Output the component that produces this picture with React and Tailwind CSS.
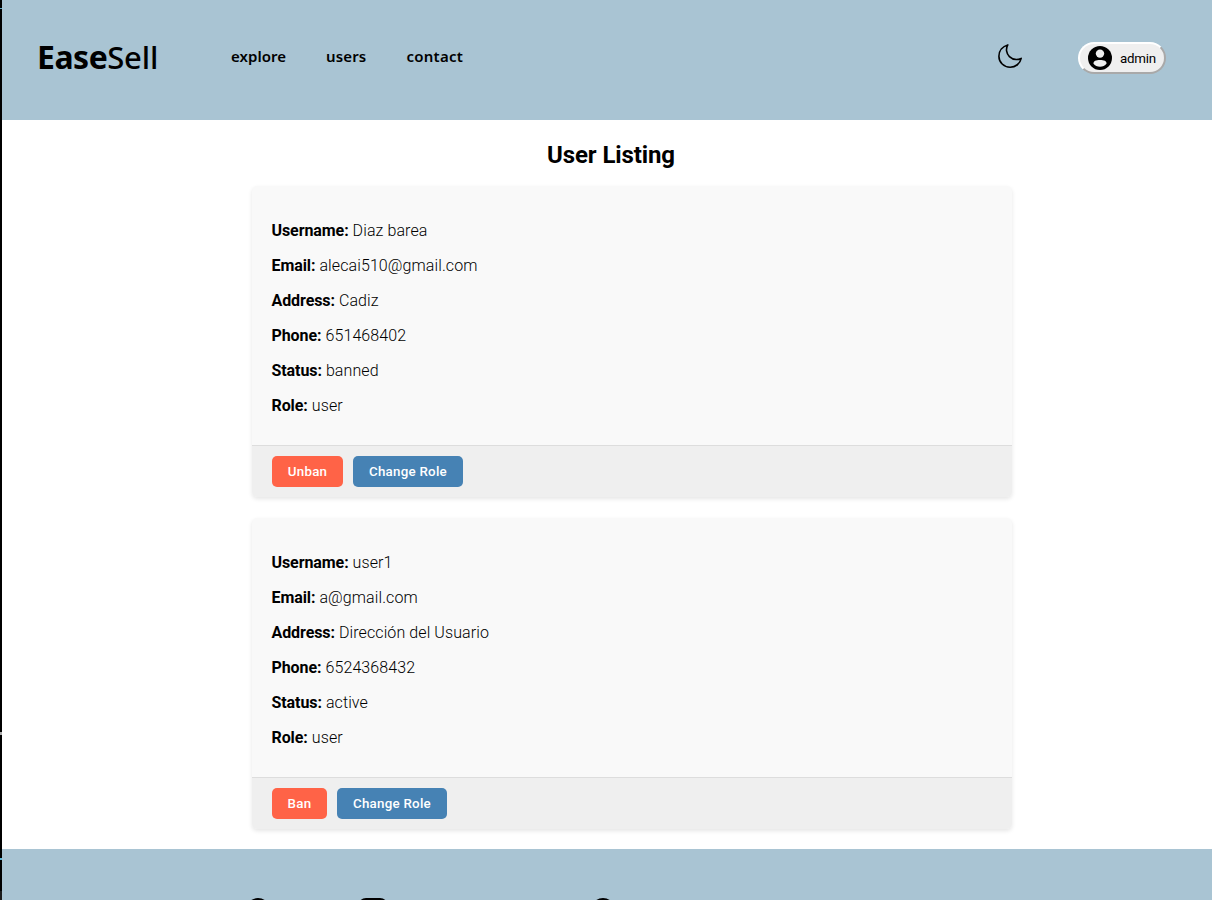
import React from "react";

const users = [
  {
    fields: [
      ["Username", "Diaz barea"],
      ["Email", "alecai510@gmail.com"],
      ["Address", "Cadiz"],
      ["Phone", "651468402"],
      ["Status", "banned"],
      ["Role", "user"],
    ],
    action: "Unban",
    actionWidth: "w-[71px]",
  },
  {
    fields: [
      ["Username", "user1"],
      ["Email", "a@gmail.com"],
      ["Address", "Dirección del Usuario"],
      ["Phone", "6524368432"],
      ["Status", "active"],
      ["Role", "user"],
    ],
    action: "Ban",
    actionWidth: "w-[55px]",
  },
];

function EdgeStrip() {
  return (
    <div className="flex h-full w-[2px] shrink-0 flex-col bg-black">
      <div className="mt-2 h-px bg-[#5fa8c4]" />
      <div className="mt-[723px] h-[3px] bg-[#aaaaaa]" />
      <div className="mt-[123px] h-[2px] bg-[#5fb8d8]" />
      <div className="mt-[31px] h-[9px] bg-[#1c1c1c]" />
    </div>
  );
}

function MoonIcon() {
  return (
    <svg viewBox="0 0 24 24" className="size-6" fill="none" stroke="black" strokeWidth="1.6" strokeLinejoin="round">
      <path d="M9.8 0.9 C4.6 2.4 0.9 6.8 0.9 12.2 C0.9 18.4 5.9 23.2 12.1 23.2 C17.6 23.2 22.1 19.6 23.2 14.4 C19.6 16 14.8 15.8 11.4 12.6 C8.2 9.5 7.6 4.6 9.8 0.9 Z" />
    </svg>
  );
}

function AccountIcon() {
  return (
    <svg viewBox="0 0 24 24" className="size-6 shrink-0">
      <circle cx="12" cy="12" r="12" fill="black" />
      <circle cx="12" cy="7.6" r="4.2" fill="#efefef" />
      <path d="M5.4 17.6 C5.4 14.9 8 14 12 14 C16 14 18.6 14.9 18.6 17.6 C17 19.9 14.7 20.8 12 20.8 C9.3 20.8 7 19.9 5.4 17.6 Z" fill="#efefef" />
    </svg>
  );
}

function Header() {
  return (
    <header className="flex h-[120px] items-start bg-[#a9c4d3] font-['Noto_Sans',sans-serif]">
      <div className="mt-[33px] ml-[35px] w-[194px] text-[32px] leading-[48px] whitespace-nowrap">
        <span className="font-bold tracking-[-0.5px]">Ease</span>
        <span className="text-[31px] font-medium tracking-[-0.2px]">Sell</span>
      </div>
      <nav className="mt-[44px] flex text-[15px] leading-6 font-semibold">
        <a className="w-[95px] tracking-[0.05px]">explore</a>
        <a className="w-[80.5px] tracking-[0.15px]">users</a>
        <a className="tracking-[0.25px]">contact</a>
      </nav>
      <div className="mt-[42px] mr-[46px] ml-auto flex items-start">
        <div className="mt-[2px] mr-[56px]">
          <MoonIcon />
        </div>
        <button className="flex h-8 w-[88px] items-center gap-2 rounded-full border-2 border-[#efefef] border-t-white border-r-[#a9a9a9] border-b-[#a9a9a9] border-l-white bg-[#efefef] pl-2 font-['Roboto',sans-serif] text-[13.33px]">
          <AccountIcon />
          <span className="pt-px tracking-[-0.25px]">admin</span>
        </button>
      </div>
    </header>
  );
}

function UserCard({ user }) {
  return (
    <article className="overflow-hidden rounded-[5px] bg-[#f9f9f9] shadow-[0_2px_4px_rgba(0,0,0,0.1)]">
      <div className="flex h-[259px] flex-col gap-[15px] px-5 pt-[35px] text-[16px] leading-5 font-[360] tracking-[0.1px]">
        {user.fields.map(([label, value]) => (
          <p key={label} className="-ml-[0.5px] whitespace-pre">
            <strong className="font-bold tracking-[-0.08px]">{label}:</strong> {value}
          </p>
        ))}
      </div>
      <div className="flex gap-[10px] border-t border-[#dddddd] bg-[#efefef] px-5 py-[10px] text-[13.33px] font-medium tracking-[0.25px] text-white">
        <button className={"h-[31px] rounded-[5px] bg-[#ff6347] " + user.actionWidth}>{user.action}</button>
        <button className="h-[31px] w-[110px] rounded-[5px] bg-[#4682b4]">Change Role</button>
      </div>
    </article>
  );
}

function Footer() {
  return (
    <footer className="h-[51px] overflow-hidden bg-[#a9c4d3] pt-[49px] pl-[244px]">
      <div className="flex">
        <svg className="size-6" viewBox="0 0 24 24"><circle cx="12" cy="12" r="12" /></svg>
        <svg className="ml-[88px] h-[30px] w-[30px]" viewBox="0 0 30 30"><rect width="30" height="30" rx="8" /></svg>
        <svg className="ml-[203px] size-6" viewBox="0 0 24 24"><circle cx="12" cy="12" r="12" /></svg>
      </div>
    </footer>
  );
}

export default function App() {
  return (
    <div className="flex h-[900px] w-[1212px] overflow-hidden bg-white font-['Roboto',sans-serif] text-black">
      <EdgeStrip />
      <div className="flex flex-1 flex-col">
        <Header />
        <main className="h-[729px] pl-[250px]">
          <h1 className="flex h-[66px] w-[718px] justify-center pt-[21px] text-[24px] leading-7 font-bold tracking-[-0.1px]">
            User Listing
          </h1>
          <div className="flex w-[760px] flex-col gap-5">
            {users.map((user) => (
              <div key={user.action} className="pb-px">
                <UserCard user={user} />
              </div>
            ))}
          </div>
        </main>
        <Footer />
      </div>
    </div>
  );
}
